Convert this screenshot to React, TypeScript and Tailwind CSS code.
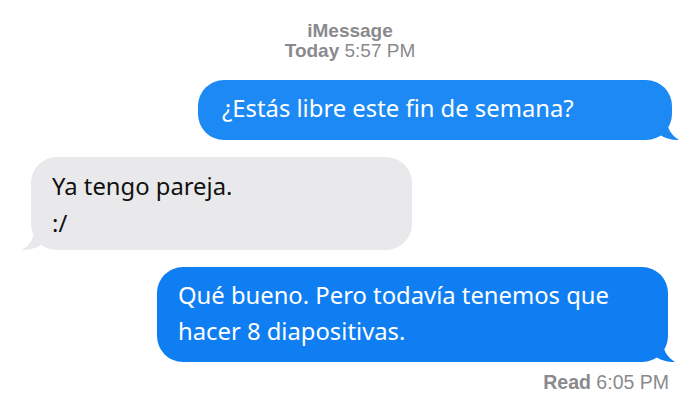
import React from "react";

function TailRight({ color }: { color: string }) {
  return (
    <svg className="absolute -right-[7px] bottom-0" width="20" height="20" viewBox="0 0 20 20">
      <path d="M0 0 L8 0 C8 8 12 15 20 20 C12 20 5 18 0 14 Z" fill={color} />
    </svg>
  );
}

function TailLeft({ color }: { color: string }) {
  return (
    <svg className="absolute -left-[9px] bottom-0" width="20" height="20" viewBox="0 0 20 20">
      <path d="M20 0 L12 0 C12 8 8 15 0 20 C8 20 15 18 20 14 Z" fill={color} />
    </svg>
  );
}

export default function App() {
  return (
    <div className="w-[700px] h-[419px] bg-white overflow-hidden relative" style={{ fontFamily: "'Noto Sans', sans-serif" }}>
      <div className="flex flex-col items-center pt-[21px] text-[#8a8a8e] text-[19px] leading-[20px]" style={{ fontFamily: "'Liberation Sans', Arial, sans-serif" }}>
        <div className="font-bold">iMessage</div>
        <div><span className="font-bold">Today</span> 5:57 PM</div>
      </div>
      <div className="flex justify-end pr-[28px] mt-[19px]">
        <div className="relative bg-[#1d89f4] text-white rounded-[26px] h-[60px] w-[474px] pl-[24px] flex items-center text-[23.8px]">
          <span className="-mt-[2px]">¿Estás libre este fin de semana?</span>
          <TailRight color="#1d89f4" />
        </div>
      </div>
      <div className="flex justify-start pl-[31px] mt-[17px]">
        <div className="relative bg-[#e9e9eb] text-[#111] rounded-[26px] h-[93px] w-[381px] pl-[21px] pt-[11px] text-[23.8px] leading-[37px]">
          <div>Ya tengo pareja.</div>
          <div>:/</div>
          <TailLeft color="#e9e9eb" />
        </div>
      </div>
      <div className="flex justify-end pr-[32px] mt-[17px]">
        <div className="relative bg-[#0f7ef2] text-white rounded-[26px] h-[95px] w-[511px] pl-[21px] pt-[10px] text-[23.8px] leading-[36px]">
          <div>Qué bueno. Pero todavía tenemos que</div>
          <div>hacer 8 diapositivas.</div>
          <TailRight color="#0f7ef2" />
        </div>
      </div>
      <div className="flex justify-end pr-[31px] mt-[11px] text-[#8a8a8e] text-[19.5px] leading-[19px]" style={{ fontFamily: "'Liberation Sans', Arial, sans-serif" }}>
        <span><span className="font-bold">Read</span> 6:05 PM</span>
      </div>
    </div>
  );
}
